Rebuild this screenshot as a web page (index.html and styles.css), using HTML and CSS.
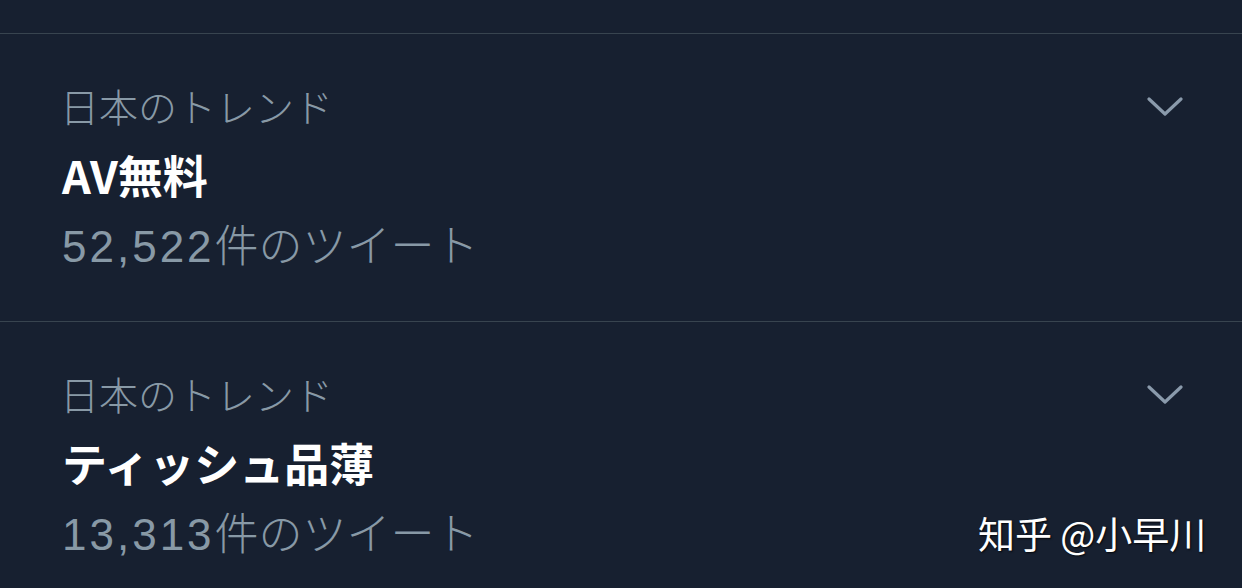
FILE: index.html
```html
<!DOCTYPE html>
<html lang="ja">
<head>
<meta charset="utf-8">
<link rel="stylesheet" href="styles.css">
</head>
<body>
<div class="page">
  <div class="top"></div>
  <div class="trend">
    <div class="info">
      <div class="label">日本のトレンド</div>
      <div class="title">AV無料</div>
      <div class="count"><span class="num">52,522</span>件のツイート</div>
    </div>
    <svg class="chev" viewBox="0 0 36 20" width="36" height="20"><path d="M2 2 L18 17 L34 2" fill="none" stroke="#8a9aab" stroke-width="3.2" stroke-linecap="round" stroke-linejoin="round"/></svg>
  </div>
  <div class="trend">
    <div class="info">
      <div class="label">日本のトレンド</div>
      <div class="title">ティッシュ品薄</div>
      <div class="count"><span class="num">13,313</span>件のツイート</div>
    </div>
    <svg class="chev" viewBox="0 0 36 20" width="36" height="20"><path d="M2 2 L18 17 L34 2" fill="none" stroke="#8a9aab" stroke-width="3.2" stroke-linecap="round" stroke-linejoin="round"/></svg>
  </div>
  <div class="mark">知乎 @小早川</div>
</div>
</body>
</html>
```
FILE: styles.css
```css
html, body {
  margin: 0;
  padding: 0;
  background: #172030;
}
.page {
  position: relative;
  width: 1242px;
  height: 588px;
  overflow: hidden;
  font-family: "Noto Sans CJK JP", "Noto Sans", sans-serif;
}
.top {
  height: 33px;
}
.trend {
  display: flex;
  justify-content: space-between;
  border-top: 1px solid #38444f;
  height: 288px;
  padding: 43px 59px 0 62px;
  box-sizing: border-box;
}
.info {
  display: flex;
  flex-direction: column;
}
.label {
  font-size: 39px;
  line-height: 56px;
  font-weight: 300;
  color: #8899a6;
  margin-left: -2px;
}
.title {
  font-size: 45px;
  line-height: 84px;
  font-weight: 700;
  color: #ffffff;
}
.count {
  font-size: 44px;
  line-height: 52px;
  font-weight: 300;
  color: #8899a6;
}
.num {
  font-family: "Liberation Sans", sans-serif;
  font-weight: 400;
  letter-spacing: 3px;
}
.chev {
  margin-top: 20px;
}
.mark {
  position: absolute;
  left: 978px;
  top: 508px;
  font-size: 37px;
  line-height: 50px;
  color: #ffffff;
  font-family: "Noto Sans CJK SC", sans-serif;
  text-shadow: 1px 1px 2px rgba(0,0,0,0.8);
}
```
